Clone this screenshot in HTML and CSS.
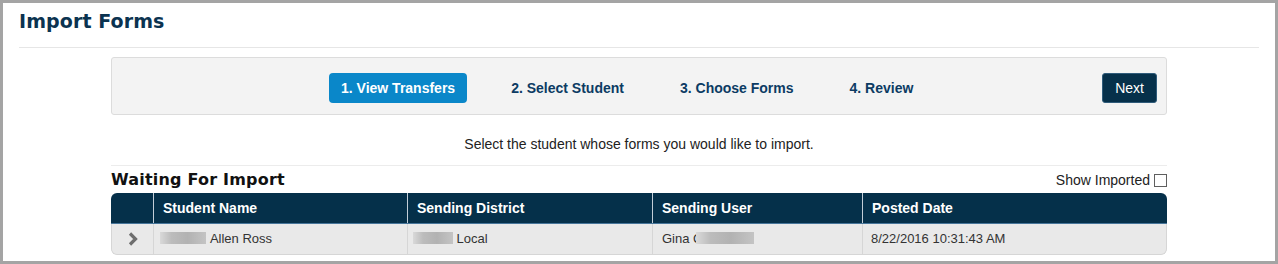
FILE: index.html
```html
<!DOCTYPE html>
<html lang="en">
<head>
<meta charset="utf-8">
<title>Import Forms</title>
<link rel="stylesheet" href="styles.css">
</head>
<body>
<div class="frame">
  <div class="page">
    <h1 class="title">Import Forms</h1>
    <div class="content">
      <div class="wizard">
        <div class="steps">
          <span class="step active">1. View Transfers</span>
          <span class="step">2. Select Student</span>
          <span class="step">3. Choose Forms</span>
          <span class="step">4. Review</span>
        </div>
        <button class="next">Next</button>
      </div>
      <p class="instruction">Select the student whose forms you would like to import.</p>
      <div class="section-head">
        <h2 class="section-title">Waiting For Import</h2>
        <label class="show-imported">Show Imported<input type="checkbox" class="box"></label>
      </div>
      <div class="tbl">
        <div class="thead">
          <div class="th"></div>
          <div class="th">Student Name</div>
          <div class="th">Sending District</div>
          <div class="th">Sending User</div>
          <div class="th">Posted Date</div>
        </div>
        <div class="trow">
          <div class="td expander">
            <svg class="chev" width="12" height="14" viewBox="0 0 12 14"><polyline points="3,1.5 8.5,7 3,12.5" fill="none" stroke="#6e6e6e" stroke-width="3.2"/></svg>
          </div>
          <div class="td"><span class="blur b1"></span> Allen Ross</div>
          <div class="td"><span class="blur b2"></span> Local</div>
          <div class="td">Gina C<span class="blur b3"></span></div>
          <div class="td date">8/22/2016 10:31:43 AM</div>
        </div>
      </div>
    </div>
  </div>
</div>
</body>
</html>
```
FILE: styles.css
```css
html, body {
  margin: 0;
  padding: 0;
  background: #fff;
}
.frame {
  height: 264px;
  box-sizing: border-box;
  border: 3px solid #a4a4a4;
  background: #fff;
  overflow: hidden;
  font-family: "Liberation Sans", Arial, sans-serif;
}
.page {
  padding: 0 16px;
}
.title {
  margin: 0;
  padding: 7px 0 15px;
  border-bottom: 1px solid #e6e6e6;
  font: bold 19px/22px "DejaVu Sans", Verdana, sans-serif;
  letter-spacing: 0.1px;
  color: #0b3350;
}
.content {
  width: 1056px;
  margin: 9px auto 0;
}
.wizard {
  display: flex;
  align-items: center;
  box-sizing: border-box;
  height: 58px;
  padding: 15px 9px 11px 10px;
  background: #f3f3f3;
  border: 1px solid #dcdcdc;
  border-radius: 3px;
}
.steps {
  flex: 1;
  display: flex;
  gap: 32px;
  padding-left: 207px;
}
.step {
  padding: 0 12px;
  height: 30px;
  line-height: 30px;
  font-weight: bold;
  font-size: 14px;
  color: #0c3b63;
  border-radius: 4px;
}
.step.active {
  background: #0a87c9;
  color: #fff;
}
.next {
  box-sizing: border-box;
  height: 30px;
  padding: 0 12px;
  background: #06304a;
  border: 1px solid #2f5b7a;
  border-radius: 3px;
  color: #fff;
  font: 14px/28px "Liberation Sans", Arial, sans-serif;
  cursor: pointer;
}
.instruction {
  margin: 21px 0 0;
  padding-bottom: 13px;
  border-bottom: 1px solid #ececec;
  text-align: center;
  font-size: 14px;
  line-height: 16px;
  color: #222;
}
.section-head {
  display: flex;
  justify-content: space-between;
  align-items: baseline;
  margin-top: 4px;
}
.section-title {
  margin: 0;
  font: bold 16px/19px "DejaVu Sans", Verdana, sans-serif;
  letter-spacing: 0.2px;
  color: #111;
}
.show-imported {
  font-size: 14px;
  line-height: 16px;
  color: #222;
}
.box {
  appearance: none;
  -webkit-appearance: none;
  display: inline-block;
  box-sizing: border-box;
  width: 13px;
  height: 13px;
  margin: 0 0 0 4px;
  vertical-align: -2px;
  border: 1px solid #5f5f5f;
  background: #fff;
}
.tbl {
  margin-top: 4px;
  border-radius: 6px;
  overflow: hidden;
}
.thead, .trow {
  display: grid;
  grid-template-columns: 42px 254px 245px 210px 305px;
}
.thead {
  background: #05304a;
  border-bottom: 1px solid #46759a;
}
.th {
  height: 30px;
  line-height: 30px;
  padding: 0 9px;
  color: #fff;
  font-weight: bold;
  font-size: 14px;
  white-space: nowrap;
}
.th + .th {
  border-left: 1px solid #c3ced8;
}
.trow {
  background: #e9e9e9;
  box-shadow: inset 1px 0 #d6d6d6, inset -1px 0 #d6d6d6, inset 0 -1px #d6d6d6;
  height: 31px;
  border-radius: 0 0 6px 6px;
}
.td {
  height: 30px;
  line-height: 30px;
  padding: 0 8px 0 9px;
  font-size: 13px;
  color: #333;
  white-space: nowrap;
}
.td + .td {
  border-left: 1px solid #d6d6d6;
}
.td.date {
  padding-left: 8px;
}
.expander {
  display: flex;
  align-items: center;
  justify-content: center;
  padding: 0;
}
.chev {
  display: block;
  margin-left: 1px;
}
.blur {
  display: inline-block;
  height: 12px;
  vertical-align: -1px;
  background: linear-gradient(90deg, #d9d9d9 0%, #bcbcbc 25%, #b2b2b2 60%, #c4c4c4 100%);
  filter: blur(0.7px);
}
.b1 {
  width: 46px;
  margin-left: -3px;
  margin-right: 1px;
}
.b2 {
  width: 40px;
  margin-left: -4px;
  margin-right: 0;
}
.b3 {
  width: 58px;
  margin-left: -6px;
}
```
